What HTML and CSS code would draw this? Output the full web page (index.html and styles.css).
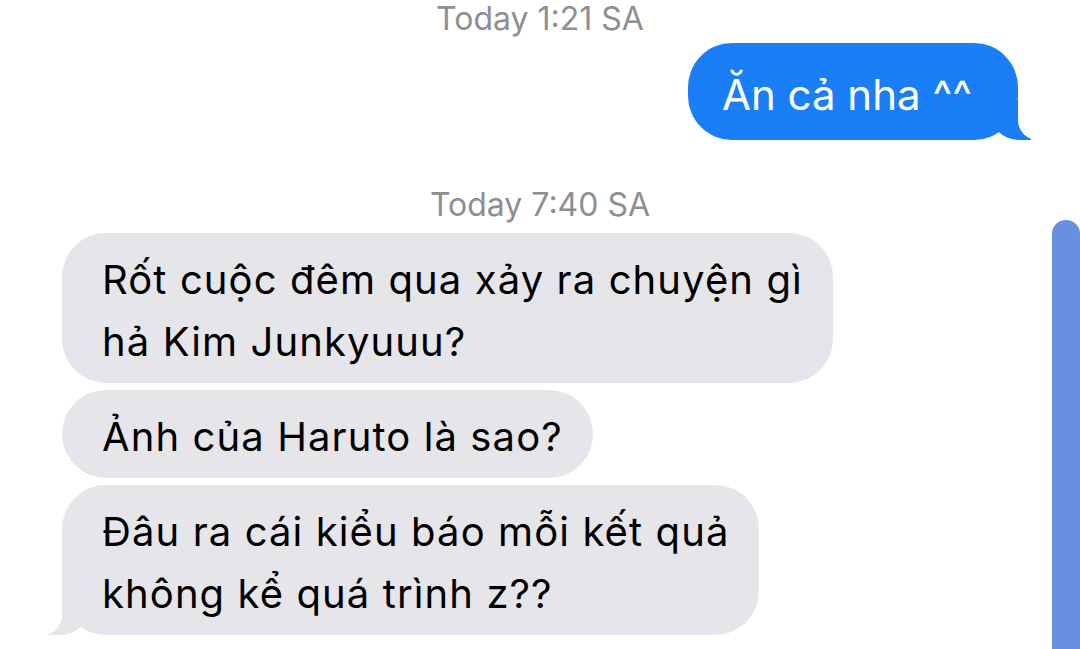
FILE: index.html
```html
<!DOCTYPE html>
<html lang="vi">

<head>
    <meta charset="UTF-8">
    <meta name="viewport" content="width=device-width, initial-scale=1.0">
    <title>Tin nhắn</title>
    <link rel="stylesheet" href="styles.css">
</head>

<body>
    <div class="chat">
        <div class="timestamp first">Today 1:21 SA</div>

        <div class="row row-me">
            <div class="bubble me tail">Ăn cả nha ^^</div>
        </div>

        <div class="timestamp second">Today 7:40 SA</div>

        <div class="group">
            <div class="row">
                <div class="bubble them">Rốt cuộc đêm qua xảy ra chuyện gì<br>hả Kim Junkyuuu?</div>
            </div>
            <div class="row">
                <div class="bubble them">Ảnh của Haruto là sao?</div>
            </div>
            <div class="row">
                <div class="bubble them tail">Đâu ra cái kiểu báo mỗi kết quả<br>không kể quá trình z??</div>
            </div>
        </div>
    </div>

    <!-- thanh cuộn -->
    <div class="scrollbar"></div>
</body>

</html>
```

FILE: styles.css
```css
body {
    margin: 0;
    padding: 0;
    background-color: #ffffff;
    font-family: Inter, "Liberation Sans", Arial, sans-serif;
    overflow: hidden;
    position: relative;
    height: 649px;
}

.chat {
    padding: 0 62px;
}

.timestamp {
    text-align: center;
    color: #8e8e93;
    font-size: 32px;
    line-height: 38px;
}

.timestamp.second {
    margin-top: 46px;
}

.row {
    display: flex;
}

.row-me {
    justify-content: flex-end;
    margin-top: 5px;
}

.group {
    display: flex;
    flex-direction: column;
    gap: 7px;
    margin-top: 9px;
}

.bubble {
    position: relative;
    border-radius: 44px;
    font-size: 40px;
    line-height: 62px;
    padding: 16px 30px 10px 40px;
}

.bubble.me {
    background-color: #1a7ff6;
    color: #ffffff;
    font-size: 42px;
    line-height: 61px;
    padding: 21px 46px 15px 34px;
}

.bubble.them {
    background-color: #e5e5ea;
    color: #000000;
    letter-spacing: 1.1px;
}

/* đuôi bong bóng */
.bubble.tail::before,
.bubble.tail::after {
    content: "";
    position: absolute;
    bottom: 0;
    height: 40px;
}

.bubble.me.tail::before {
    right: -13px;
    width: 42px;
    background-color: #1a7ff6;
    border-bottom-left-radius: 30px;
}

.bubble.me.tail::after {
    right: -52px;
    width: 52px;
    background-color: #ffffff;
    border-bottom-left-radius: 20px;
}

.bubble.them.tail::before {
    left: -14px;
    width: 42px;
    background-color: #e5e5ea;
    border-bottom-right-radius: 30px;
}

.bubble.them.tail::after {
    left: -52px;
    width: 52px;
    background-color: #ffffff;
    border-bottom-right-radius: 20px;
}

.scrollbar {
    position: absolute;
    top: 220px;
    right: 0;
    width: 28px;
    height: 460px;
    background-color: #6a8fdf;
    border-radius: 14px 14px 0 0;
}
```
